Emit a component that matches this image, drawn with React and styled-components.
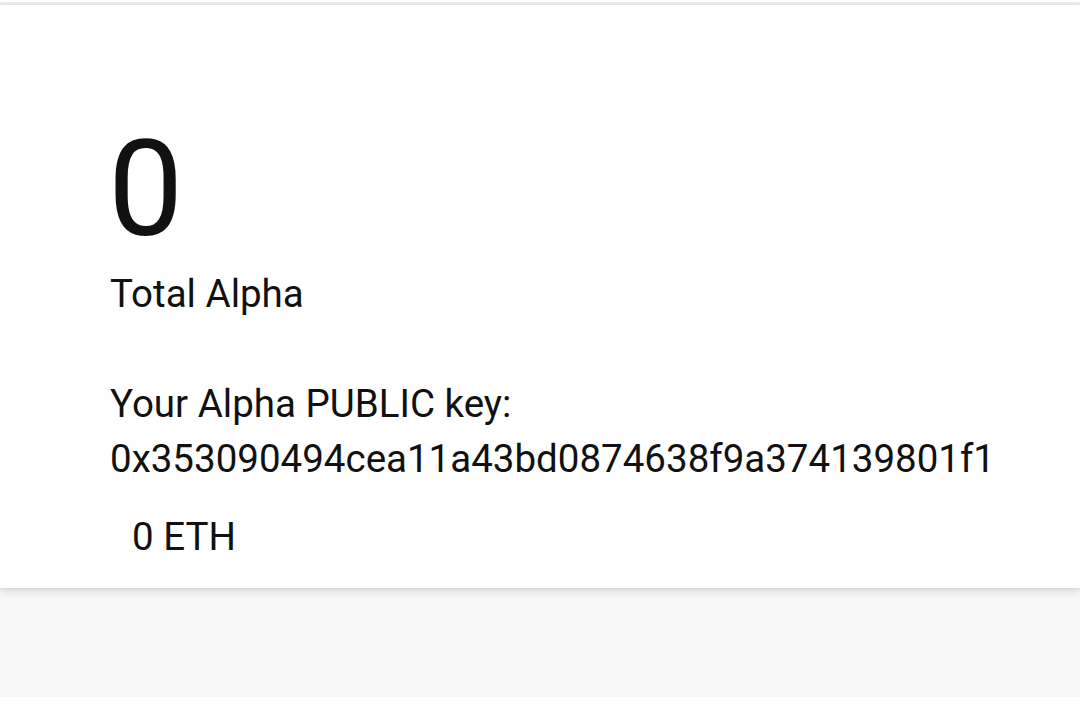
import React from "react";
import styled, { createGlobalStyle } from "styled-components";

const Global = createGlobalStyle`
  html, body { margin: 0; padding: 0; background: #ffffff; }
  body { font-family: Roboto, "Noto Sans", Arial, sans-serif; color: #111111; }
`;

const Page = styled.div`
  display: flex;
  flex-direction: column;
  width: 1080px;
`;

const TopStrip = styled.div`
  height: 3px;
  margin-top: 2px;
  background: #ececec;
`;

const Backdrop = styled.div`
  background: #f8f8f8;
  padding-bottom: 109px;
`;

const Card = styled.section`
  background: #ffffff;
  box-shadow: 0 4px 9px rgba(0, 0, 0, 0.12), 0 1px 2px rgba(0, 0, 0, 0.06);
  padding: 118px 0 24px 110px;
  display: flex;
  flex-direction: column;
`;

const BigNumber = styled.div`
  font-size: 134px;
  line-height: 134px;
  font-weight: 400;
  margin-left: -2px;
`;

const Text = styled.div`
  font-size: 38.5px;
  line-height: 55px;
  margin-top: ${(p) => p.$gap || 0}px;
  padding-left: ${(p) => p.$indent || 0}px;
`;

export default function App() {
  return (
    <Page>
      <Global />
      <TopStrip />
      <Backdrop>
        <Card>
          <BigNumber>0</BigNumber>
          <Text $gap={9}>Total Alpha</Text>
          <Text $gap={55}>Your Alpha PUBLIC key:</Text>
          <Text>0x353090494cea11a43bd0874638f9a374139801f1</Text>
          <Text $gap={23} $indent={22}>0 ETH</Text>
        </Card>
      </Backdrop>
    </Page>
  );
}
